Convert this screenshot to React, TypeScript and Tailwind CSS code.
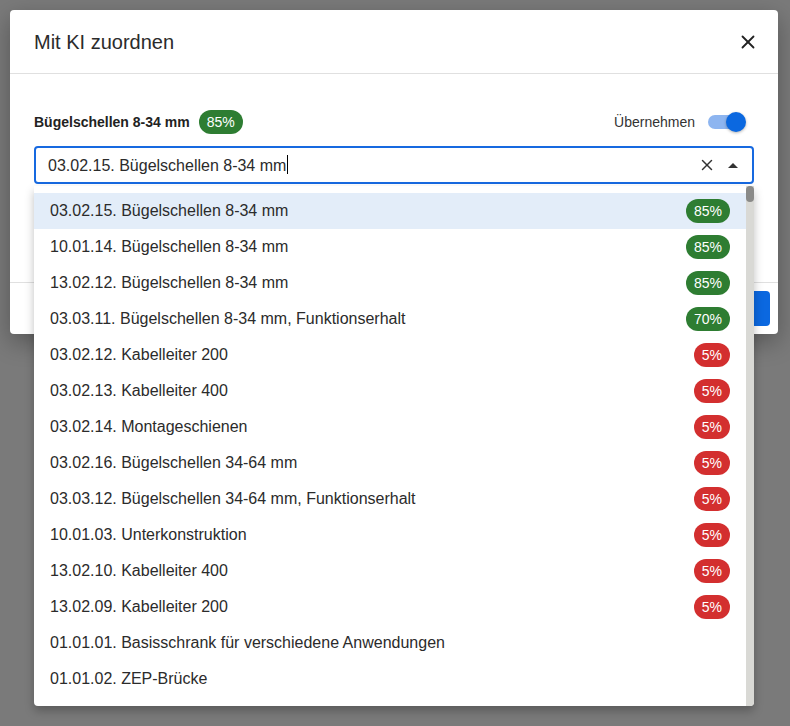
import { X } from "lucide-react";

type Option = { label: string; score?: number };

const OPTIONS: Option[] = [
  { label: "03.02.15. Bügelschellen 8-34 mm", score: 85 },
  { label: "10.01.14. Bügelschellen 8-34 mm", score: 85 },
  { label: "13.02.12. Bügelschellen 8-34 mm", score: 85 },
  { label: "03.03.11. Bügelschellen 8-34 mm, Funktionserhalt", score: 70 },
  { label: "03.02.12. Kabelleiter 200", score: 5 },
  { label: "03.02.13. Kabelleiter 400", score: 5 },
  { label: "03.02.14. Montageschienen", score: 5 },
  { label: "03.02.16. Bügelschellen 34-64 mm", score: 5 },
  { label: "03.03.12. Bügelschellen 34-64 mm, Funktionserhalt", score: 5 },
  { label: "10.01.03. Unterkonstruktion", score: 5 },
  { label: "13.02.10. Kabelleiter 400", score: 5 },
  { label: "13.02.09. Kabelleiter 200", score: 5 },
  { label: "01.01.01. Basisschrank für verschiedene Anwendungen" },
  { label: "01.01.02. ZEP-Brücke" },
];

function ScoreBadge({ score }: { score: number }) {
  // green for good matches, red for weak ones
  const color = score >= 50 ? "bg-[#2e7d32]" : "bg-[#d32f2f]";
  return (
    <span
      className={`inline-flex h-6 items-center rounded-full px-2 text-sm leading-none text-white ${color}`}
    >
      {score}%
    </span>
  );
}

function Toggle() {
  return (
    <div className="relative h-5 w-[38px]">
      <div className="absolute left-0 top-[3px] h-[14px] w-[34px] rounded-full bg-[#8db5f0]" />
      <div className="absolute right-0 top-0 h-5 w-5 rounded-full bg-[#0b68e0] shadow-[0_1px_3px_rgba(0,0,0,0.3)]" />
    </div>
  );
}

function Dropdown() {
  return (
    <div className="absolute left-0 right-0 top-[calc(100%+2px)] z-10 flex h-[520px] overflow-hidden rounded-b bg-white shadow-[0_5px_10px_rgba(0,0,0,0.25)]">
      <ul className="flex-1 pt-[7px]">
        {OPTIONS.map((opt, i) => (
          <li
            key={opt.label}
            className={`flex h-9 items-center justify-between pl-4 pr-4 text-base text-[#2b2b2b] ${
              i === 0 ? "bg-[#e3edf9]" : ""
            }`}
          >
            <span>{opt.label}</span>
            {opt.score !== undefined && <ScoreBadge score={opt.score} />}
          </li>
        ))}
      </ul>
      {/* scrollbar */}
      <div className="w-2 bg-[#d9d9d5]">
        <div className="h-4 rounded-full bg-[#8a8a88]" />
      </div>
    </div>
  );
}

export default function App() {
  return (
    <div
      className="h-[726px] w-[790px] overflow-hidden bg-[#7a7a7a] p-[10px] pr-3"
      style={{ fontFamily: '"Liberation Sans", Arial, sans-serif' }}
    >
      <div className="rounded bg-white shadow-[0_8px_24px_rgba(0,0,0,0.3)]">
        {/* Header */}
        <div className="flex h-16 items-center justify-between border-b border-[#e0e0e0] pl-6 pr-[19px]">
          <h2 className="text-xl text-[#2b2b2b]">Mit KI zuordnen</h2>
          <X size={22} strokeWidth={2} className="text-[#222]" />
        </div>

        {/* Content */}
        <div className="px-6 pb-[98px] pt-[36px]">
          <div className="flex h-6 items-center justify-between pr-[8px]">
            <div className="flex items-center gap-[9px]">
              <span className="text-sm font-bold text-[#222]">
                Bügelschellen 8-34 mm
              </span>
              <ScoreBadge score={85} />
            </div>
            <div className="flex items-center gap-[13px]">
              <span className="text-sm text-[#333]">Übernehmen</span>
              <Toggle />
            </div>
          </div>

          <div className="relative mt-3">
            <div className="flex h-[38px] items-center rounded border-2 border-[#1769e0] pl-3 pr-[12px]">
              <span className="flex-1 text-base text-[#2b2b2b]">
                03.02.15. Bügelschellen 8-34 mm
                <span className="ml-px inline-block h-[19px] w-px translate-y-[3px] bg-black" />
              </span>
              <X size={18} strokeWidth={2} className="mr-[12px] text-[#333]" />
              <svg width="10" height="5" viewBox="0 0 10 5" className="mr-[2px]">
                <path d="M0 5 L5 0 L10 5 Z" fill="#333" />
              </svg>
            </div>
            <Dropdown />
          </div>
        </div>

        {/* Footer, mostly hidden behind the open dropdown */}
        <div className="flex h-[52px] items-center justify-end border-t border-[#e0e0e0] pr-2">
          <button aria-label="Speichern" className="h-[35px] w-[120px] rounded bg-[#0b68e0]" />
        </div>
      </div>
    </div>
  );
}
